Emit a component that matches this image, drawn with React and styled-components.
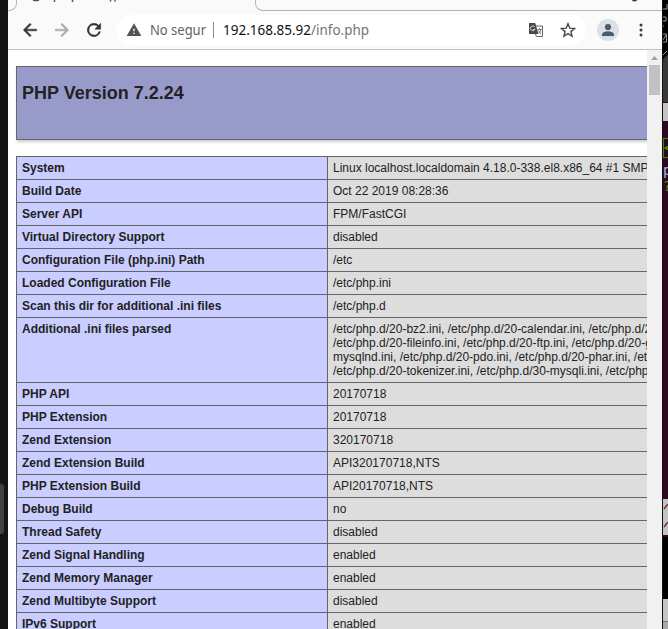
import React from "react";
import styled, { createGlobalStyle } from "styled-components";

const Global = createGlobalStyle`
  * { box-sizing: border-box; }
  html, body { margin: 0; overflow: hidden; background: #141414; }
`;
const Desktop = styled.div`
  display: grid;
  grid-template-columns: 8px 654px 6px;
  width: 668px;
  height: 629px;
  overflow: hidden;
  background: #141414;
  font-family: "Liberation Sans", Arial, sans-serif;
`;
const Dock = styled.div`
  padding-top: 484px;
`;
const DockHandle = styled.div`
  width: 4px;
  height: 50px;
  background: #404040;
  border-radius: 0 3px 3px 0;
`;
const Browser = styled.main`
  display: flex;
  flex-direction: column;
  height: 629px;
  min-width: 0;
  overflow: hidden;
  background: #fff;
`;
const TabBar = styled.div`
  display: flex;
  height: 11px;
  flex: none;
  background: #fafafa;
`;
const TabEdge = styled.div`
  width: ${(p) => p.$width}px;
  height: 11px;
  flex: none;
  border: 1px solid #b4b4b4;
  border-top: 0;
  border-left-width: ${(p) => (p.$side === "left" ? 0 : 1)}px;
  border-right-width: ${(p) => (p.$side === "left" ? 1 : 0)}px;
  border-radius: ${(p) => (p.$side === "left" ? "0 0 8px 0" : "0 0 0 8px")};
`;
const TabMarks = styled.svg`
  display: block;
  width: ${(p) => p.$width}px;
  height: 3px;
`;
const Toolbar = styled.header`
  display: flex;
  align-items: center;
  height: 39px;
  flex: none;
  padding: 0 11px 1px 12px;
  border-bottom: 1px solid #c3c3c3;
  background: #fafafa;
`;
const NavIcon = styled.svg`
  width: 20px;
  height: 20px;
  flex: none;
  margin-right: 12px;
  fill: ${(p) => (p.$muted ? "#a9a9a9" : "#333")};
  stroke: ${(p) => (p.$muted ? "#a9a9a9" : "#333")};
  stroke-width: 0.6;
`;
const AddressBar = styled.div`
  display: flex;
  align-items: center;
  width: 470px;
  height: 30px;
  flex: none;
  padding: 0 10px;
  border-radius: 15px;
  background: #fff;
`;
const WarningIcon = styled.svg`
  width: 16px;
  height: 16px;
  flex: none;
  fill: #50555a;
`;
const FittedText = styled.svg`
  width: ${(p) => p.$width}px;
  height: 20px;
  flex: none;
  font: 14px "Noto Sans", "Open Sans", sans-serif;
`;
const Warning = styled(FittedText)`
  margin-left: 8px;
  fill: #5f6368;
`;
const Host = styled(FittedText)`
  margin-left: 9px;
`;
const Divider = styled.i`
  width: 1px;
  height: 16px;
  margin-left: 6px;
  background: #8c8c8c;
`;
const BarActions = styled.div`
  display: flex;
  align-items: center;
  gap: 16px;
  margin-left: auto;
`;
const ActionIcon = styled.svg`
  display: block;
  width: 16px;
  height: 16px;
`;
const Avatar = styled.div`
  display: grid;
  place-items: center;
  width: 22px;
  height: 22px;
  flex: none;
  margin-left: 11px;
  border-radius: 50%;
  background: #dce0e6;
`;
const MenuIcon = styled.svg`
  width: 4px;
  height: 16px;
  margin-left: 20px;
  fill: #3c3c3c;
`;
const Viewport = styled.div`
  display: grid;
  grid-template-columns: 639px 15px;
  height: 579px;
  overflow: hidden;
`;
const Page = styled.div`
  padding: 16px 0 0 8px;
  overflow: hidden;
`;
const Banner = styled.section`
  width: 934px;
  height: 74px;
  padding: 16px 5px;
  border: 1px solid #666;
  background: #989bc9;
  box-shadow: 1px 2px 3px #ccc;
`;
const Title = styled.h1`
  margin: 0;
  color: #222;
  font-size: 18px;
  line-height: 20px;
`;
const InfoTable = styled.table`
  width: 934px;
  margin-top: 16px;
  border-collapse: collapse;
  table-layout: fixed;
  color: #222;
  font-size: 12px;
  line-height: 14px;
`;
const Label = styled.th`
  width: 311px;
  padding: 4px 5px;
  border: 1px solid #666;
  background: #cacdff;
  text-align: left;
  vertical-align: top;
`;
const Value = styled.td`
  padding: 4px 5px;
  border: 1px solid #666;
  background: #ddd;
  white-space: pre;
`;
const Scrollbar = styled.div`
  display: flex;
  flex-direction: column;
  align-items: center;
  background: #f1f1f1;
`;
const ScrollArrow = styled.svg`
  width: 15px;
  height: 15px;
  fill: #a3a3a3;
`;
const Thumb = styled.div`
  width: 11px;
  height: 30px;
  background: #c1c1c1;
`;
const Terminal = styled.aside`
  display: flex;
  flex-direction: column;
  border-left: 1px solid #161016;
  background: #2d0922;
  overflow: hidden;
`;
const TerminalBlock = styled.div`
  width: 5px;
  height: ${(p) => p.$height}px;
  flex: none;
  overflow: hidden;
  background: ${(p) => p.$bg || "#2d0922"};
`;
const TerminalText = styled(TerminalBlock)`
  color: ${(p) => p.$color};
  font: 14px/${(p) => p.$height}px "DejaVu Sans Mono", monospace;
`;
const SelectedCell = styled.div`
  width: 8px;
  height: 20px;
  flex: none;
  border: 1px solid #3c8a08;
  color: #4e9a06;
  font: bold 13px/18px "DejaVu Sans Mono", monospace;
`;
const EdgeDrawing = styled.svg`
  display: block;
  width: 5px;
  height: ${(p) => p.$height}px;
`;

const rows = [
  ["System", "Linux localhost.localdomain 4.18.0-338.el8.x86_64 #1 SMP"],
  ["Build Date", "Oct 22 2019 08:28:36"],
  ["Server API", "FPM/FastCGI"],
  ["Virtual Directory Support", "disabled"],
  ["Configuration File (php.ini) Path", "/etc"],
  ["Loaded Configuration File", "/etc/php.ini"],
  ["Scan this dir for additional .ini files", "/etc/php.d"],
  ["Additional .ini files parsed", "/etc/php.d/20-bz2.ini, /etc/php.d/20-calendar.ini, /etc/php.d/20-ctype.ini,\n/etc/php.d/20-fileinfo.ini, /etc/php.d/20-ftp.ini, /etc/php.d/20-gettext.ini,\nmysqlnd.ini, /etc/php.d/20-pdo.ini, /etc/php.d/20-phar.ini, /etc/php.d/20-sockets.ini,\n/etc/php.d/20-tokenizer.ini, /etc/php.d/30-mysqli.ini, /etc/php.d/30-pdo_mysql.ini"],
  ["PHP API", "20170718"],
  ["PHP Extension", "20170718"],
  ["Zend Extension", "320170718"],
  ["Zend Extension Build", "API320170718,NTS"],
  ["PHP Extension Build", "API20170718,NTS"],
  ["Debug Build", "no"],
  ["Thread Safety", "disabled"],
  ["Zend Signal Handling", "enabled"],
  ["Zend Memory Manager", "enabled"],
  ["Zend Multibyte Support", "disabled"],
  ["IPv6 Support", "enabled"],
];

function BrowserTabs() {
  return (
    <TabBar>
      <TabEdge $width={9} $side="left" />
      <TabMarks $width={238} fill="none" stroke="#555" strokeWidth="1.500">
        <path d="M16 0q3 1 6 0M37.500 0v2M55.500 0v2M93.500 0v1.500M98 0v1.500" />
      </TabMarks>
      <TabEdge $width={407} $side="right">
        <TabMarks $width={405}><circle cx="378.500" cy="-1.500" r="3" fill="#444" /></TabMarks>
      </TabEdge>
    </TabBar>
  );
}

function BrowserToolbar() {
  return (
    <Toolbar>
      <NavIcon viewBox="0 0 24 24"><path d="M20 11H7.800l5.600-5.600L12 4l-8 8 8 8 1.400-1.400L7.800 13H20z" /></NavIcon>
      <NavIcon viewBox="0 0 24 24" $muted><path d="M12 4l-1.400 1.400 5.600 5.600H4v2h12.200l-5.600 5.600L12 20l8-8z" /></NavIcon>
      <NavIcon viewBox="0 0 24 24"><path d="M17.650 6.350A8 8 0 1 0 19.730 14h-2.080A6 6 0 1 1 12 6c1.660 0 3.140.69 4.220 1.780L13 11h7V4z" /></NavIcon>
      <AddressBar>
        <WarningIcon viewBox="0 0 24 24"><path d="M1 21h22L12 2zm12-3h-2v-2h2zm0-4h-2v-4h2z" /></WarningIcon>
        <Warning $width={57}><text x="0" y="15" textLength="56" lengthAdjust="spacingAndGlyphs">No segur</text></Warning>
        <Divider />
        <Host $width={150}>
          <text x="0" y="15" textLength="88" lengthAdjust="spacingAndGlyphs" fill="#111">192.168.85.92</text>
          <text x="88" y="15" textLength="58" lengthAdjust="spacingAndGlyphs" fill="#70757a">/info.php</text>
        </Host>
        <BarActions>
          <ActionIcon viewBox="0 0 16 16">
            <path d="M7 4h7.500v10.500H8.500L7 11z" fill="#fff" stroke="#666" />
            <path d="M1 1h6.200l3.300 11H1z" fill="#484848" />
            <path d="M6.800 5A2.400 2.400 0 1 0 7 7.300H5M9.500 7.500h4M11.500 6v1.500M13 7.500q-.5 2.500-3 4M10 8.500l3 3.500" fill="none" stroke="#ddd" />
            <path d="M9.500 7.500h4M11.500 6v1.500M13 7.500q-.5 2.500-2.500 4M10.500 8.500l2.500 3.500" fill="none" stroke="#666" strokeWidth=".8" />
          </ActionIcon>
          <ActionIcon viewBox="0 0 16 16">
            <path d="M8 1.700l1.800 4.500 4.800.3-3.700 3.100 1.200 4.700L8 11.700l-4.100 2.600 1.200-4.700-3.700-3.100 4.800-.3z" fill="none" stroke="#484848" strokeWidth="1.400" />
          </ActionIcon>
        </BarActions>
      </AddressBar>
      <Avatar>
        <ActionIcon viewBox="0 0 16 16" fill="#4a5b6c"><circle cx="8" cy="5" r="3.100" /><path d="M2 14v-1.500c0-2.300 4-3.300 6-3.300s6 1 6 3.300V14z" /></ActionIcon>
      </Avatar>
      <MenuIcon viewBox="0 0 4 16"><circle cx="2" cy="3" r="1.500" /><circle cx="2" cy="8" r="1.500" /><circle cx="2" cy="13" r="1.500" /></MenuIcon>
    </Toolbar>
  );
}

export default function App() {
  return (
    <Desktop>
      <Global />
      <Dock><DockHandle /></Dock>
      <Browser>
        <BrowserTabs />
        <BrowserToolbar />
        <Viewport>
          <Page>
            <Banner><Title>PHP Version 7.2.24</Title></Banner>
            <InfoTable>
              <tbody>
                {rows.map(([label, value]) => <tr key={label}><Label>{label}</Label><Value>{value}</Value></tr>)}
              </tbody>
            </InfoTable>
          </Page>
          <Scrollbar>
            <ScrollArrow viewBox="0 0 15 15"><path d="M4 10l3.500-4 3.500 4z" /></ScrollArrow>
            <Thumb />
          </Scrollbar>
        </Viewport>
      </Browser>
      <Terminal>
        <TerminalBlock $height={102} $bg="#000">
          <EdgeDrawing $height={102}>
            <path d="M0 102V61q0-4 5-6v47z" fill="#393939" />
            <path d="M4 4v5H0M0 17h3v4H0M0 26h1M0 34h3.500v8H0M3 35L0 40M0 55l4-4" fill="none" stroke="#999" />
          </EdgeDrawing>
        </TerminalBlock>
        <TerminalBlock $height={1} />
        <TerminalBlock $height={18} $bg="#c4c2c4" />
        <TerminalBlock $height={17} />
        <SelectedCell>&lt;</SelectedCell>
        <TerminalBlock $height={3} />
        <TerminalText $height={18} $color="#a9b8d8">p</TerminalText>
        <TerminalText $height={14} $color="#4e9a06">?</TerminalText>
        <TerminalBlock $height={306} />
        <TerminalBlock $height={36} $bg="#c4c2c4">
          <EdgeDrawing $height={36} fill="none" stroke="#713535" strokeWidth="1.500"><path d="M1 10l3-4 2-1M1 28l3-4 2-1" /></EdgeDrawing>
        </TerminalBlock>
        <TerminalBlock $height={2} />
        <TerminalBlock $height={62} $bg="#000" />
        <TerminalBlock $height={22} $bg="#c4c4c4" />
        <TerminalBlock $height={1} $bg="#777" />
        <TerminalBlock $height={7} $bg="#aaa" />
      </Terminal>
    </Desktop>
  );
}
